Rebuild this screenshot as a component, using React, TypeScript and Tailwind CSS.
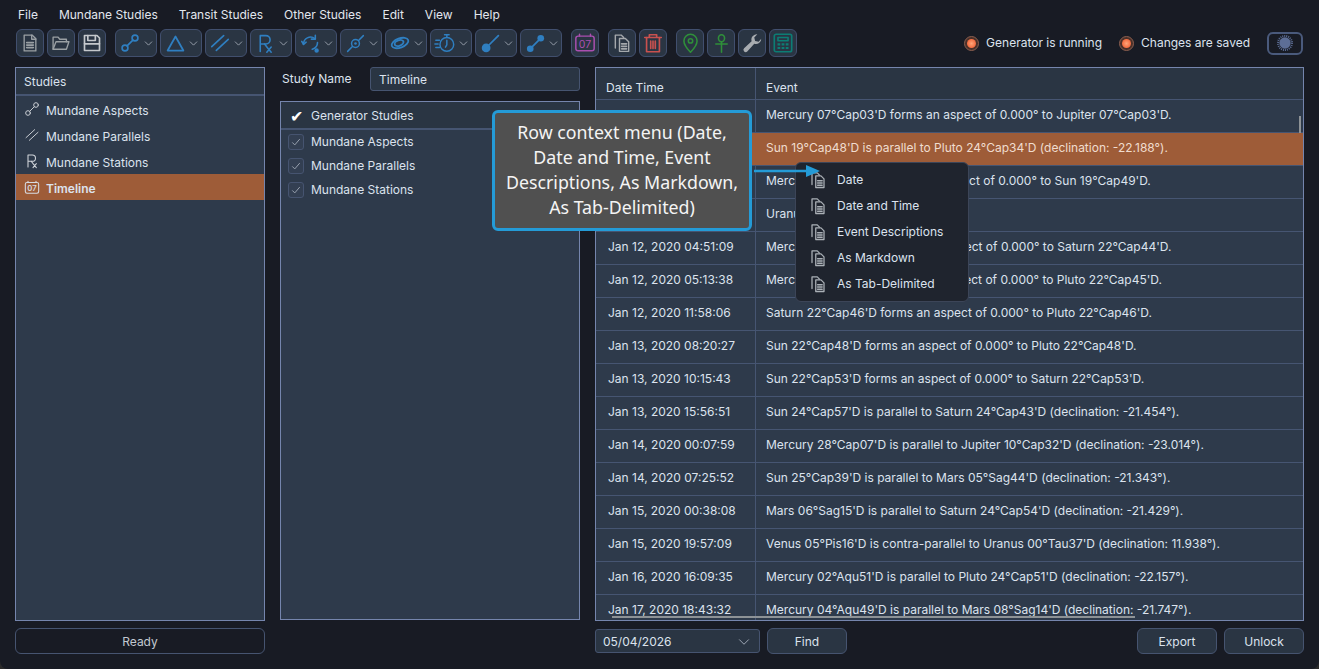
import React from 'react';
import { ChevronDown } from 'lucide-react';

const BLUE = '#2f7fc1';

const Svg = ({ color = BLUE, size = 20, sw = 1.8, children }: { color?: string, size?: number, sw?: number, children: React.ReactNode }) => (
    <svg width={size} height={size} viewBox="0 0 24 24" fill="none" stroke={color} strokeWidth={sw} strokeLinecap="round" strokeLinejoin="round">{children}</svg>
);

const DocIcon = () => (
    <Svg color="#9aa0a4" size={20} sw={1.6}>
        <path d="M5 2.5h9.5l4.5 4.5v14.500H5z" />
        <path d="M14 2.500v5h5" />
        <path d="M8 11.500h8M8 14.500h8M8 17.500h8" strokeWidth={2} />
    </Svg>
);
const FolderIcon = () => (
    <Svg color="#9aa0a4" size={20} sw={1.6}>
        <path d="M2.500 19.500V5h6l2 2.500h8v3" />
        <path d="M2.500 19.500h16l3-9H6z" />
    </Svg>
);
const SaveIcon = () => (
    <Svg color="#c4c8cc" size={20} sw={2}>
        <path d="M3 3h15l3 3v15H3z" />
        <path d="M7 3v6h9V3" />
        <path d="M3 13h18" />
    </Svg>
);
const AspectIcon = ({ color = BLUE, size = 20, sw = 2 }: { color?: string, size?: number, sw?: number }) => (
    <Svg color={color} size={size} sw={sw}>
        <circle cx="6" cy="18" r="3.500" />
        <circle cx="18" cy="6" r="3.500" />
        <path d="M8.500 15.500l7-7" />
    </Svg>
);
const TriangleIcon = () => (
    <Svg size={21} sw={2}>
        <path d="M12 4L3 20h18z" />
    </Svg>
);
const ParallelIcon = ({ color = BLUE, size = 22, sw = 1.8 }: { color?: string, size?: number, sw?: number }) => (
    <Svg color={color} size={size} sw={sw}>
        <path d="M3 16L16 4M8 20L21 8" />
    </Svg>
);
const RxIcon = ({ color = BLUE, size = 21, sw = 1.8 }: { color?: string, size?: number, sw?: number }) => (
    <Svg color={color} size={size} sw={sw}>
        <path d="M6 21V3h6.500a4.500 4.500 0 0 1 0 9.500H6" />
        <path d="M11 12.500l3 4M13.500 16l5 6M18.500 16l-5 6" />
    </Svg>
);
const ReturnIcon = () => (
    <Svg size={21} sw={1.8}>
        <path d="M4 13a8 8 0 0 1 13-6.500M20 11a8 8 0 0 1-6 7.500" />
        <path d="M17.500 2.500v4.500H13M2 9.500l2 3.500 3-2.500" />
        <circle cx="19" cy="20" r="2.500" fill={BLUE} stroke="none" />
    </Svg>
);
const NodeIcon = () => (
    <Svg size={21} sw={1.7}>
        <circle cx="12" cy="12" r="4.500" />
        <circle cx="12" cy="12" r="1.500" fill={BLUE} stroke="none" />
        <path d="M3 21l5.500-5.500M15.500 8.500L21 3" />
    </Svg>
);
const EclipseIcon = () => (
    <Svg size={22} sw={2}>
        <ellipse cx="12" cy="12" rx="9.500" ry="5" transform="rotate(-20 12 12)" />
        <ellipse cx="11" cy="12" rx="5" ry="3" transform="rotate(-20 11 12)" />
    </Svg>
);
const TimerIcon = () => (
    <Svg size={22} sw={1.6}>
        <circle cx="14" cy="13.500" r="7.500" />
        <path d="M14 9v5l-1.500 2.500M11.500 3h5M14 3v3" />
        <path d="M2 9h4M1 13h3.500M2 17h4" />
    </Svg>
);
const ProbeIcon = () => (
    <Svg size={21} sw={2}>
        <circle cx="7" cy="17" r="5" fill={BLUE} stroke="none" />
        <path d="M10 14L21 3" />
    </Svg>
);
const DotsIcon = () => (
    <Svg size={21} sw={2}>
        <circle cx="6" cy="18" r="3.800" fill={BLUE} stroke="none" />
        <circle cx="18" cy="6" r="3.800" fill={BLUE} stroke="none" />
        <path d="M7 17L17 7" />
    </Svg>
);
const CalIcon = ({ color = '#a94fb0', size = 22 }: { color?: string, size?: number }) => (
    <svg width={size} height={size} viewBox="0 0 24 24" fill="none" stroke={color} strokeWidth="1.600" strokeLinecap="round">
        <rect x="2" y="4.500" width="20" height="16" rx="2.500" />
        <path d="M6 2.500v2M18 2.500v2" />
        <text x="12" y="17" textAnchor="middle" fontSize="11.500" fill={color} stroke="none" fontFamily="Inter, sans-serif">07</text>
    </svg>
);
const CopyIcon = ({ color = '#a4a8ac', size = 20 }: { color?: string, size?: number }) => (
    <Svg color={color} size={size} sw={1.700}>
        <path d="M4 18V2.500h7l3 3" />
        <path d="M9 22V6.500h7l4 4V22z" />
        <path d="M11.500 13h6M11.500 16h6M11.500 19h6" strokeWidth={2} />
    </Svg>
);
const TrashIcon = () => (
    <Svg color="#c9514f" size={22} sw={1.800}>
        <path d="M3 6h18M8 6V3h8v3" />
        <path d="M5 6v15.500h14V6" />
        <path d="M9.500 10v8M12 10v8M14.500 10v8" />
    </Svg>
);
const PinIcon = () => (
    <Svg color="#2f8f3a" size={21} sw={1.800}>
        <path d="M12 22s7.500-8 7.500-13a7.500 7.500 0 0 0-15 0c0 5 7.500 13 7.500 13z" />
        <circle cx="12" cy="9" r="2.500" />
    </Svg>
);
const AnkhIcon = () => (
    <Svg color="#2f8f3a" size={21} sw={1.800}>
        <ellipse cx="12" cy="6" rx="3.500" ry="4" />
        <path d="M12 10v12M5.500 12.500h13" />
    </Svg>
);
const WrenchIcon = () => (
    <svg width="21" height="21" viewBox="0 0 24 24" fill="#a8acb0">
        <path d="M22 6.500a6 6 0 0 1-8 5.800L6 21a2.500 2.500 0 0 1-3.600-3.500l8.600-8.200A6 6 0 0 1 17.500 1.500L14 5l1 4 4 1 3-3.500z" />
    </svg>
);
const CalcIcon = () => (
    <Svg color="#0c7d74" size={22} sw={1.800}>
        <rect x="2.500" y="2.500" width="19" height="19" rx="2" />
        <rect x="6.500" y="6" width="11" height="3.500" />
        <path d="M6 13.500h3M10.500 13.500h3M15 13.500h3M6 17.500h3M10.500 17.500h3M15 17.500h3" strokeWidth={2.200} strokeLinecap="butt" />
    </Svg>
);
const SunIcon = () => (
    <svg width="16" height="16" viewBox="0 0 24 24">
        <circle cx="12" cy="12" r="10.500" fill="none" stroke="#5d6e96" strokeWidth="3" strokeDasharray="1.500 1.500" />
        <circle cx="12" cy="12" r="8.500" fill="#5d6e96" />
    </svg>
);

const Btn = ({ children }: { children: React.ReactNode }) => (
    <div className="w-[28px] h-[28px] flex items-center justify-center rounded-md bg-[#2a3543] border border-[#414f6e]">{children}</div>
);
const Drop = ({ children }: { children: React.ReactNode }) => (
    <div className="w-[42px] h-[28px] flex items-center pl-[2px] rounded-md bg-[#2a3543] border border-[#414f6e]">
        <span className="w-[24px] flex justify-center shrink-0">{children}</span>
        <ChevronDown size={13} color="#b4bbc6" strokeWidth={1.400} />
    </div>
);

const Lamp = () => (
    <span className="w-[15px] h-[15px] rounded-full bg-[#4a3029] border border-[#8a5f50] flex items-center justify-center">
        <span className="w-[9px] h-[9px] rounded-full bg-[radial-gradient(circle,#ffa478_0%,#f2663a_75%,#c8522f_100%)]" />
    </span>
);

const rows = [
    ['Jan 09, 2020 11:41:09', "Mercury 07°Cap03'D forms an aspect of 0.000° to Jupiter 07°Cap03'D."],
    ['', "Sun 19°Cap48'D is parallel to Pluto 24°Cap34'D (declination: -22.188°)."],
    ['', "Mercury 19°Cap49'D forms an aspect of 0.000° to Sun 19°Cap49'D."],
    ['', 'Uranus'],
    ['Jan 12, 2020 04:51:09', "Mercury 22°Cap44'D forms an aspect of 0.000° to Saturn 22°Cap44'D."],
    ['Jan 12, 2020 05:13:38', "Mercury 22°Cap45'D forms an aspect of 0.000° to Pluto 22°Cap45'D."],
    ['Jan 12, 2020 11:58:06', "Saturn 22°Cap46'D forms an aspect of 0.000° to Pluto 22°Cap46'D."],
    ['Jan 13, 2020 08:20:27', "Sun 22°Cap48'D forms an aspect of 0.000° to Pluto 22°Cap48'D."],
    ['Jan 13, 2020 10:15:43', "Sun 22°Cap53'D forms an aspect of 0.000° to Saturn 22°Cap53'D."],
    ['Jan 13, 2020 15:56:51', "Sun 24°Cap57'D is parallel to Saturn 24°Cap43'D (declination: -21.454°)."],
    ['Jan 14, 2020 00:07:59', "Mercury 28°Cap07'D is parallel to Jupiter 10°Cap32'D (declination: -23.014°)."],
    ['Jan 14, 2020 07:25:52', "Sun 25°Cap39'D is parallel to Mars 05°Sag44'D (declination: -21.343°)."],
    ['Jan 15, 2020 00:38:08', "Mars 06°Sag15'D is parallel to Saturn 24°Cap54'D (declination: -21.429°)."],
    ['Jan 15, 2020 19:57:09', "Venus 05°Pis16'D is contra-parallel to Uranus 00°Tau37'D (declination: 11.938°)."],
    ['Jan 16, 2020 16:09:35', "Mercury 02°Aqu51'D is parallel to Pluto 24°Cap51'D (declination: -22.157°)."],
    ['Jan 17, 2020 18:43:32', "Mercury 04°Aqu49'D is parallel to Mars 08°Sag14'D (declination: -21.747°)."],
];

const menuItems = ['Date', 'Date and Time', 'Event Descriptions', 'As Markdown', 'As Tab-Delimited'];

const StudyRow = ({ icon, label, active }: { icon: React.ReactNode, label: string, active?: boolean }) => (
    <div className={`h-[26px] flex items-center pl-[8px] pt-[3px] ${active ? 'bg-[#9e5c38] font-semibold' : ''}`}>
        <span className="w-[16px] flex justify-center mr-[6px] mt-[-3px]">{icon}</span>
        {label}
    </div>
);

const CheckRow = ({ label }: { label: string }) => (
    <div className="h-[24px] flex items-center pl-[7px]">
        <span className="w-[16px] h-[16px] rounded-[3px] border border-[#465470] bg-[#333f52] flex items-center justify-center mr-[7px]">
            <svg width="10" height="10" viewBox="0 0 12 12" fill="none" stroke="#97a0ae" strokeWidth="1.200"><path d="M1.500 6.500l3 3 6-7" /></svg>
        </span>
        {label}
    </div>
);

export default function App() {
    return (
        <div className="bg-[#2b2b2b] w-[1319px] h-[669px] overflow-hidden">
            <div className="relative w-[1319px] h-[669px] overflow-hidden rounded-b-[8px] bg-[#181b24] text-[#dce3ee] text-[12px] font-['Inter',sans-serif]">
                <div className="h-[28px] flex items-center pl-[18px] pt-[2px] gap-[21px] text-[#e3e7ee]">
                    {['File', 'Mundane Studies', 'Transit Studies', 'Other Studies', 'Edit', 'View', 'Help'].map(m => <span key={m}>{m}</span>)}
                </div>

                <div className="h-[28px] mt-[1px] flex items-center pl-[16px] pr-[16px]">
                    <div className="flex gap-[3px]"><Btn><DocIcon /></Btn><Btn><FolderIcon /></Btn><Btn><SaveIcon /></Btn></div>
                    <div className="flex gap-[3px] ml-[9px]">
                        <Drop><AspectIcon /></Drop>
                        <Drop><TriangleIcon /></Drop>
                        <Drop><ParallelIcon /></Drop>
                        <Drop><RxIcon /></Drop>
                        <Drop><ReturnIcon /></Drop>
                        <Drop><NodeIcon /></Drop>
                        <Drop><EclipseIcon /></Drop>
                        <Drop><TimerIcon /></Drop>
                        <Drop><ProbeIcon /></Drop>
                        <Drop><DotsIcon /></Drop>
                    </div>
                    <div className="ml-[9px]"><Btn><CalIcon /></Btn></div>
                    <div className="flex gap-[3px] ml-[9px]"><Btn><CopyIcon /></Btn><Btn><TrashIcon /></Btn></div>
                    <div className="flex gap-[3px] ml-[9px]"><Btn><PinIcon /></Btn><Btn><AnkhIcon /></Btn><Btn><WrenchIcon /></Btn><Btn><CalcIcon /></Btn></div>
                    <div className="ml-auto flex items-center">
                        <Lamp />
                        <span className="ml-[7px] mr-[17px]">Generator is running</span>
                        <Lamp />
                        <span className="ml-[7px] mr-[17px]">Changes are saved</span>
                        <div className="w-[36px] h-[23px] rounded-md border-2 border-[#4a5a7c] flex items-center justify-center"><SunIcon /></div>
                    </div>
                </div>

                <div className="mt-[10px] flex px-[15px]">
                    <div className="w-[250px] shrink-0">
                        <div className="h-[554px] bg-[#2e3a4b] border border-[#7585ad]">
                            <div className="h-[28px] flex items-center pl-[8px] pt-[2px] bg-[#2a3543] border-b-2 border-[#465572]">Studies</div>
                            <StudyRow icon={<AspectIcon color="#c8ccd2" size={18} sw={1.500} />} label="Mundane Aspects" />
                            <StudyRow icon={<ParallelIcon color="#c8ccd2" size={18} sw={1.500} />} label="Mundane Parallels" />
                            <StudyRow icon={<RxIcon color="#d0d4da" size={20} sw={1.600} />} label="Mundane Stations" />
                            <StudyRow icon={<CalIcon color="#d8dce2" size={17} />} label="Timeline" active />
                        </div>
                        <div className="mt-[7px] h-[26px] pt-[1px] rounded-md border border-[#465470] flex items-center justify-center text-[#c2c8d0]">Ready</div>
                    </div>

                    <div className="w-[300px] shrink-0 ml-[15px]">
                        <div className="flex items-center h-[24px]">
                            <span className="ml-[2px] w-[88px]">Study Name</span>
                            <div className="flex-1 h-[24px] pt-[1px] flex items-center pl-[8px] rounded-[3px] bg-[#2a3543] border border-[#465470]">Timeline</div>
                        </div>
                        <div className="mt-[10px] h-[519px] bg-[#2e3a4b] border border-[#7585ad]">
                            <div className="h-[28px] pt-[2px] flex items-center bg-[#2a3543] border-b-2 border-[#465572] pl-[9px]">
                                <span className="text-white text-[16px] leading-none w-[21px]">✔</span>Generator Studies
                            </div>
                            <CheckRow label="Mundane Aspects" />
                            <CheckRow label="Mundane Parallels" />
                            <CheckRow label="Mundane Stations" />
                        </div>
                    </div>

                    <div className="w-[709px] shrink-0 ml-[15px]">
                        <div className="relative h-[554px] overflow-hidden bg-[#2e3a4b] border border-[#7585ad]">
                            <div className="h-[32px] flex bg-[#2a3543] border-b border-[#465572]">
                                <div className="w-[160px] flex items-center pl-[10px] pt-[9px] border-r border-[#465572]">Date Time</div>
                                <div className="pl-[10px] pt-[9px] flex items-center">Event</div>
                            </div>
                            {rows.map((r, i) => (
                                <div key={i} className={`h-[33px] flex border-b border-[#465572] ${i === 1 ? 'bg-[#9e5c38] text-[#f0dccf]' : ''}`}>
                                    <div className={`w-[160px] shrink-0 pl-[12px] pb-[2px] flex items-center ${i === 1 ? '' : 'border-r border-[#465572]'}`}>{r[0]}</div>
                                    <div className="pl-[10px] pb-[2px] flex items-center whitespace-nowrap">{r[1]}</div>
                                </div>
                            ))}
                            <div className="absolute left-[16px] bottom-[2px] w-[523px] h-[2px] bg-[#8d9296]" />
                            <div className="absolute right-[2px] top-[48px] w-[2px] h-[17px] bg-[#8d9296]" />
                        </div>
                        <div className="mt-[7px] flex items-center">
                            <div className="w-[165px] h-[24px] pt-[1px] flex items-center pl-[7px] pr-[6px] justify-between rounded-[3px] bg-[#2a3543] border border-[#465470]">
                                05/04/2026<ChevronDown size={18} color="#aab2bf" strokeWidth={1.200} />
                            </div>
                            <div className="ml-[7px] w-[80px] h-[26px] pt-[1px] flex items-center justify-center rounded-md bg-[#2a3543] border border-[#465470]">Find</div>
                            <div className="ml-auto w-[80px] h-[26px] pt-[1px] flex items-center justify-center rounded-md bg-[#2a3543] border border-[#465470]">Export</div>
                            <div className="ml-[7px] w-[80px] h-[26px] pt-[1px] flex items-center justify-center rounded-md bg-[#2a3543] border border-[#465470]">Unlock</div>
                        </div>
                    </div>
                </div>

                {/* context menu and annotation lie over the table */}
                <div className="absolute left-[795px] top-[162px] w-[174px] h-[140px] rounded-md bg-[#1f242e] border border-[#3c4558] pt-[4px]">
                    {menuItems.map(m => (
                        <div key={m} className="h-[26px] flex items-center pl-[13px] gap-[10px]">
                            <CopyIcon size={18} color="#aab0b6" />{m}
                        </div>
                    ))}
                </div>
                <div className="absolute left-[492px] top-[110px] w-[260px] h-[121px] pb-[2px] rounded-[6px] bg-[#505050] border-[3px] border-[#249bd7] flex items-center justify-center text-center px-[6px] text-[17.800px] leading-[25px] text-[#f4f4f4] font-['Noto_Sans',sans-serif]">
                    Row context menu (Date, Date and Time, Event Descriptions, As Markdown, As Tab-Delimited)
                </div>
                <svg className="absolute left-[752px] top-[164px]" width="70" height="14" viewBox="0 0 70 14">
                    <path d="M2 7h54" stroke="#249bd7" strokeWidth="2.500" />
                    <path d="M54 1l14 6-14 6z" fill="#249bd7" />
                </svg>
            </div>
        </div>
    );
}
